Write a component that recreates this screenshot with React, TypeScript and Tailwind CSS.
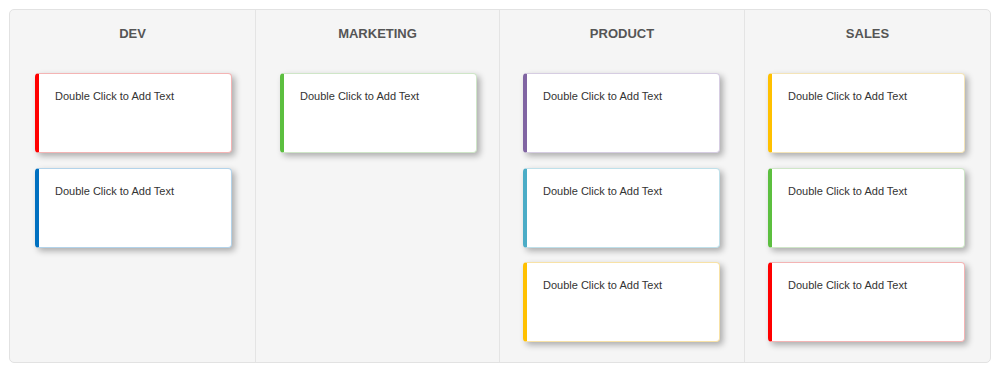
import React from 'react';

type Card = { bar: string; edge: string };

const columns: { title: string; pad: string; cards: Card[] }[] = [
  {
    title: 'DEV',
    pad: 'pl-[25px]',
    cards: [
      { bar: 'border-l-[#ff0000]', edge: 'border-[#f4b4b4]' },
      { bar: 'border-l-[#0070c0]', edge: 'border-[#b3d3ea]' },
    ],
  },
  {
    title: 'MARKETING',
    pad: 'pl-6',
    cards: [{ bar: 'border-l-[#5cbf3f]', edge: 'border-[#cfe6c8]' }],
  },
  {
    title: 'PRODUCT',
    pad: 'pl-[23px]',
    cards: [
      { bar: 'border-l-[#8064a2]', edge: 'border-[#d6cde2]' },
      { bar: 'border-l-[#4bacc6]', edge: 'border-[#bfe0ea]' },
      { bar: 'border-l-[#ffc000]', edge: 'border-[#f8e2a6]' },
    ],
  },
  {
    title: 'SALES',
    pad: 'pl-[23px]',
    cards: [
      { bar: 'border-l-[#ffc000]', edge: 'border-[#f4e4b8]' },
      { bar: 'border-l-[#5cbf3f]', edge: 'border-[#cfe6c8]' },
      { bar: 'border-l-[#ff0000]', edge: 'border-[#f4b4b4]' },
    ],
  },
];

const Note = ({ card }: { card: Card }) => (
  <div
    className={`w-[197px] h-[80px] bg-white rounded-[4px] border border-l-4 ${card.edge} ${card.bar} pl-4 pt-[14px] shadow-[3px_3px_6px_rgba(0,0,0,0.3)]`}
  >
    <p className="text-[11px] leading-4 text-[#333]">Double Click to Add Text</p>
  </div>
);

export default function App() {
  return (
    <div
      className="w-[1000px] h-[371px] bg-white p-[9px]"
      style={{ fontFamily: '"Liberation Sans", Arial, sans-serif' }}
    >
      <div className="h-[354px] grid grid-cols-[245px_244px_245px_1fr] bg-[#f5f5f5] border border-[#e2e2e2] rounded-[5px] overflow-hidden">
        {columns.map((col, i) => (
          <div
            key={col.title}
            className={`flex flex-col pt-4 ${i > 0 ? 'border-l border-[#e4e4e4]' : ''}`}
          >
            <h2 className="text-center text-[13px] leading-4 font-bold text-[#555]">{col.title}</h2>
            <div className={`mt-[31px] flex flex-col gap-[14.5px] ${col.pad}`}>
              {col.cards.map((c, j) => (
                <Note key={j} card={c} />
              ))}
            </div>
          </div>
        ))}
      </div>
    </div>
  );
}
